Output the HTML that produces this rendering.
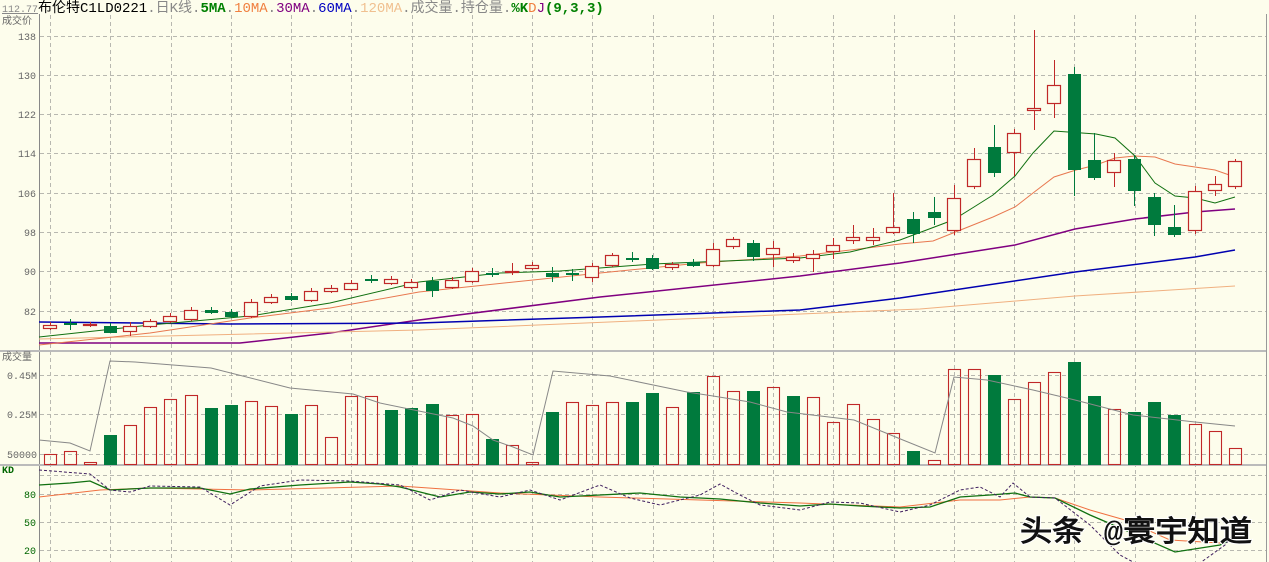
<!DOCTYPE html>
<html><head><meta charset="utf-8"><style>
html,body{margin:0;padding:0;background:#fdfdec;width:1269px;height:562px;overflow:hidden}
svg{display:block}
text{font-family:"Liberation Mono","WenQuanYi Zen Hei",monospace}
</style></head><body>
<svg id="s" width="1269" height="562" xmlns="http://www.w3.org/2000/svg">
<rect width="1269" height="562" fill="#fdfdec"/>
<text y="12" font-size="14" font-family="Liberation Sans,WenQuanYi Zen Hei,sans-serif"><tspan x="2" font-size="10" fill="#888" text-decoration="underline">112.77</tspan><tspan x="38" fill="#000">布伦特C1LD0221</tspan><tspan fill="#888">.日K线.</tspan><tspan fill="#008000" font-weight="bold">5MA</tspan><tspan fill="#888">.</tspan><tspan fill="#f08040">10MA</tspan><tspan fill="#888">.</tspan><tspan fill="#800080">30MA</tspan><tspan fill="#888">.</tspan><tspan fill="#0000c0">60MA</tspan><tspan fill="#888">.</tspan><tspan fill="#f0c090">120MA</tspan><tspan fill="#888">.成交量.持仓量.</tspan><tspan fill="#008000" font-weight="bold">%K</tspan><tspan fill="#f08040">D</tspan><tspan fill="#800080">J</tspan><tspan fill="#008000" font-weight="bold">(9,3,3)</tspan></text>
<g id="g"></g>
<text x="1020" y="541" font-size="29" font-weight="bold" font-family="WenQuanYi Zen Hei,Noto Sans CJK SC,sans-serif" fill="#111" stroke="#fff" stroke-width="2" paint-order="stroke" textLength="232" lengthAdjust="spacingAndGlyphs">头条 @寰宇知道</text>
</svg>
<script>
var g=document.getElementById('g'),h='';
function L(x1,y1,x2,y2,c,w,d){h+='<line x1="'+x1+'" y1="'+y1+'" x2="'+x2+'" y2="'+y2+'" stroke="'+c+'" stroke-width="'+(w||1)+'"'+(d?' stroke-dasharray="'+d+'"':'')+'/>';}
function T(x,y,t,c){h+='<text x="'+x+'" y="'+y+'" font-size="10" fill="'+(c||'#666')+'" text-anchor="end">'+t+'</text>';}
function P(pts,c,w,d){h+='<polyline fill="none" stroke="'+c+'" stroke-width="'+(w||1)+'"'+(d?' stroke-dasharray="'+d+'"':'')+' points="'+pts+'"/>';}
var gc='#b8b8b0',dd='4,3';
[36,75,114,153,193,232,271,311,375,414,454,475,494,522,550].forEach(function(y){L(40,y+.5,1266,y+.5,gc,1,dd);});
for(var k=0;k<20;k++){var x=Math.round(50+60.25*k)+.5;L(x,15,x,562,gc,1,dd);}
L(39.5,14,39.5,562,'#888',1);L(1266.5,14,1266.5,562,'#999',1);
L(0,351,1266,351,'#bbb',2);L(0,465,1266,465,'#bbb',2);
h+='<text x="2" y="24" font-size="10" fill="#666">成交价</text>';
[[36,138],[75,130],[114,122],[153,114],[193,106],[232,98],[271,90],[311,82]].forEach(function(a){T(36,a[0]+4,a[1]);});
h+='<text x="2" y="360" font-size="10" fill="#666">成交量</text>';
T(37,379,'0.45M');T(37,418,'0.25M');T(37,458,'50000');
h+='<text x="2" y="473" font-size="10" fill="#060" font-weight="bold">KD</text>';
T(36,498,'80','#060');T(36,526,'50','#060');T(36,554,'20','#060');
var C=[[325,328,322,330,'r'],[323,324,319,330,'g'],[324,325,322,327,'r'],[326,332,323,333,'g'],[326,331,322,336,'r'],[321,326,319,328,'r'],[316,321,313,323,'r'],[310,319,307,321,'r'],[310,312,307,314,'g'],[312,316,309,318,'g'],[302,316,299,318,'r'],[297,302,294,304,'r'],[296,299,293,301,'g'],[291,300,288,302,'r'],[288,291,285,293,'r'],[283,289,280,291,'r'],[279,280,275,283,'g'],[279,283,276,285,'r'],[282,287,279,289,'r'],[281,290,277,297,'g'],[280,287,277,289,'r'],[271,281,268,283,'r'],[273,274,268,277,'g'],[271,272,263,275,'r'],[265,268,262,270,'r'],[273,276,267,282,'g'],[273,274,269,281,'g'],[266,277,263,282,'r'],[255,265,253,267,'r'],[258,259,252,262,'g'],[258,268,255,270,'g'],[264,267,262,270,'r'],[262,265,259,267,'g'],[249,265,243,267,'r'],[239,246,237,249,'r'],[243,256,240,261,'g'],[248,254,241,267,'r'],[257,260,253,263,'r'],[254,258,250,272,'r'],[245,251,238,259,'r'],[237,240,225,244,'r'],[237,240,228,245,'r'],[227,232,193,234,'r'],[219,233,212,243,'g'],[212,217,197,225,'g'],[198,230,185,235,'r'],[159,186,148,189,'r'],[147,172,125,177,'g'],[133,152,129,176,'r'],[108,110,30,130,'r'],[85,103,60,118,'r'],[74,169,67,196,'g'],[160,177,133,180,'g'],[160,172,153,187,'r'],[159,190,155,206,'g'],[197,224,193,236,'g'],[227,234,205,237,'g'],[191,230,186,234,'r'],[184,190,176,196,'r'],[161,186,159,189,'r']];
var V=[[454,'r'],[451,'r'],[462,'r'],[435,'g'],[425,'r'],[407,'r'],[399,'r'],[395,'r'],[408,'g'],[405,'g'],[401,'r'],[406,'r'],[414,'g'],[405,'r'],[437,'r'],[396,'r'],[396,'r'],[410,'g'],[408,'g'],[404,'g'],[415,'r'],[414,'r'],[439,'g'],[445,'r'],[462,'r'],[412,'g'],[402,'r'],[405,'r'],[402,'r'],[402,'g'],[393,'g'],[407,'r'],[392,'g'],[376,'r'],[391,'r'],[391,'g'],[387,'r'],[396,'g'],[397,'r'],[422,'r'],[404,'r'],[419,'r'],[433,'r'],[451,'g'],[460,'r'],[369,'r'],[369,'r'],[375,'g'],[399,'r'],[382,'r'],[372,'r'],[362,'g'],[396,'g'],[409,'r'],[412,'g'],[402,'g'],[415,'g'],[424,'r'],[431,'r'],[448,'r']];
var R='#c02828',G='#007a3d';
P('39,343 150,343 240,343 330,333 419,320 600,297 800,276 900,263 1015,245 1075,229 1135,219 1195,212 1235,209','#800080',1.5);
P('39,322 230,324 419,323 600,317 800,310 900,298 1075,272 1195,257 1235,250','#0000b0',1.5);
P('39,339 419,330 920,309 1075,296 1235,286','#f0b080',1);
P('39,345 150,333 250,318 330,308 419,292 600,273 700,263 800,256 900,244 933,241 953,233 993,217 1015,207 1033,193 1054,177 1076,170 1096,165 1115,158 1135,156 1155,157 1175,164 1195,167 1215,170 1235,177','#e87850',1);
P('39,337 150,325 250,316 330,303 419,282 500,273 560,271 653,264 700,262 800,258 850,252 900,240 953,220 974,207 993,195 1015,176 1033,153 1054,131 1096,134 1115,138 1135,156 1155,183 1175,196 1195,198 1215,203 1235,197','#107010',1);
for(var i=0;i<60;i++){
 var x=Math.round(50+20.08*i),c=C[i],col=c[4]=='r'?R:G;
 L(x+.5,c[2],x+.5,c[0],col,1);L(x+.5,c[1],x+.5,c[3],col,1);
 var hh=Math.max(c[1]-c[0],1);
 if(c[4]=='r')h+='<rect x="'+(x-6.5)+'" y="'+(c[0]+.5)+'" width="13" height="'+hh+'" fill="#fdfdec" stroke="'+R+'" stroke-width="1.2"/>';
 else h+='<rect x="'+(x-6)+'" y="'+c[0]+'" width="13" height="'+(hh+1)+'" fill="'+G+'"/>';
 var v=V[i];
 if(v[1]=='r')h+='<rect x="'+(x-5.5)+'" y="'+(v[0]+.5)+'" width="12" height="'+(464-v[0])+'" fill="none" stroke="'+R+'" stroke-width="1.1"/>';
 else h+='<rect x="'+(x-6)+'" y="'+v[0]+'" width="13" height="'+(465-v[0])+'" fill="'+G+'"/>';
}
P('39,440 70,443 90,451 110,361 135,362 211,368 290,388 353,394 380,403 453,418 473,426 493,440 513,447 533,455 553,371 610,376 687,392 713,396 750,402 787,412 854,420 898,438 935,453 954,377 987,380 1033,390 1075,400 1133,415 1195,422 1235,426','#888',1);
P('39,497 100,490 150,488 250,490 400,486 500,493 600,497 700,500 800,503 900,507 960,500 1000,500 1030,497 1055,498 1090,510 1125,520 1170,540 1220,543 1235,540','#f07040',1);
P('39,485 70,483 90,481 110,490 150,488 200,488 230,494 250,489 300,485 350,482 380,484 400,487 440,497 470,492 500,494 530,492 560,497 600,495 640,493 680,497 720,499 760,503 800,506 830,504 860,506 900,508 930,507 960,497 990,495 1015,493 1030,497 1055,498 1090,515 1125,530 1175,552 1220,545 1235,538','#107010',1.3);
P('39,470 90,474 110,490 130,492 150,486 200,487 230,505 260,486 300,480 350,481 400,485 430,500 460,490 500,497 530,490 560,500 600,485 630,498 660,505 700,495 720,484 740,495 760,505 800,510 830,502 860,503 900,512 930,505 960,490 980,487 1000,497 1013,483 1030,497 1055,498 1090,525 1120,555 1135,563 1200,563 1225,545 1235,532','#402060',1,'3,2');
g.innerHTML=h;
</script>
</body></html>
